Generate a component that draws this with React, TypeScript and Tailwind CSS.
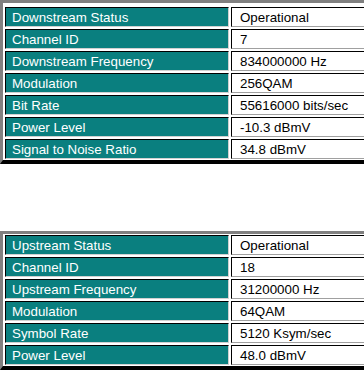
import React from 'react';

type Row = { label: string; value: string };

const downstream: Row[] = [
    { label: 'Downstream Status', value: 'Operational' },
    { label: 'Channel ID', value: '7' },
    { label: 'Downstream Frequency', value: '834000000 Hz' },
    { label: 'Modulation', value: '256QAM' },
    { label: 'Bit Rate', value: '55616000 bits/sec' },
    { label: 'Power Level', value: '-10.3 dBmV' },
    { label: 'Signal to Noise Ratio', value: '34.8 dBmV' },
];

const upstream: Row[] = [
    { label: 'Upstream Status', value: 'Operational' },
    { label: 'Channel ID', value: '18' },
    { label: 'Upstream Frequency', value: '31200000 Hz' },
    { label: 'Modulation', value: '64QAM' },
    { label: 'Symbol Rate', value: '5120 Ksym/sec' },
    { label: 'Power Level', value: '48.0 dBmV' },
];

const StatusTable: React.FC<{ rows: Row[]; top: 'loose' | 'tight' }> = ({ rows, top }) => {
    return (
        <div
            className={`w-[420px] border-t-[3px] border-l-[3px] border-t-[#808080] border-l-[#808080] border-b-4 border-r-4 border-b-black border-r-black pl-[2px] pb-px flex flex-col gap-[2px] ${top === 'loose' ? 'pt-[4px]' : 'pt-px'}`}>
            {rows.map((row) => (
                <div key={row.label} className="flex gap-[2px] h-[20px]">
                    <div className="w-[224px] shrink-0 bg-[#0a7f7f] text-white border-t border-l border-t-black border-l-black border-b border-r border-b-[#d0d0d0] border-r-[#d0d0d0] pl-[6px] pt-px leading-[18px]">
                        {row.label}
                    </div>
                    <div className="flex-1 bg-white text-black border-t border-l border-t-black border-l-black border-b border-r border-b-[#a0a0a0] border-r-[#a0a0a0] pl-[8px] pt-px leading-[18px]">
                        {row.value}
                    </div>
                </div>
            ))}
        </div>
    );
};

export default function App() {
    return (
        <div className="w-[364px] h-[371px] overflow-hidden bg-white text-[13.33px] font-['Liberation_Sans',Arial,sans-serif]">
            <StatusTable rows={downstream} top="loose" />
            <div className="h-[67px]" />
            <StatusTable rows={upstream} top="tight" />
        </div>
    );
}
